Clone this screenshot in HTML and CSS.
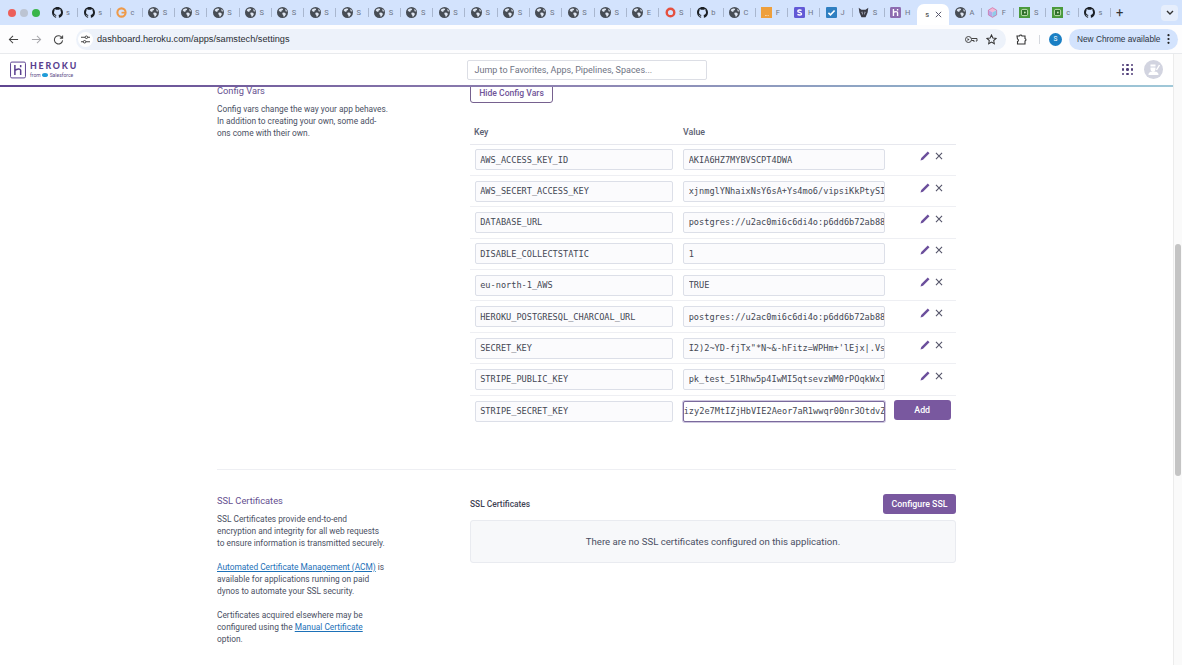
FILE: index.html
```html
<!DOCTYPE html>
<html lang="en">
<head>
    <meta charset="UTF-8">
    <title>samstech · Settings | Heroku</title>
    <link rel="stylesheet" href="styles.css">
</head>
<body>
    <svg class="icon-defs" aria-hidden="true">
        <symbol id="gh" viewBox="0 0 16 16"><path fill="#1b1f24" d="M8 0C3.58 0 0 3.58 0 8c0 3.54 2.29 6.53 5.47 7.59.4.07.55-.17.55-.38 0-.19-.01-.82-.01-1.49-2.01.37-2.53-.49-2.69-.94-.09-.23-.48-.94-.82-1.13-.28-.15-.68-.52-.01-.53.63-.01 1.08.58 1.23.82.72 1.21 1.87.87 2.33.66.07-.52.28-.87.51-1.07-1.78-.2-3.64-.89-3.64-3.95 0-.87.31-1.59.82-2.15-.08-.2-.36-1.02.08-2.12 0 0 .67-.21 2.2.82.64-.18 1.32-.27 2-.27.68 0 1.36.09 2 .27 1.53-1.04 2.2-.82 2.2-.82.44 1.1.16 1.92.08 2.12.51.56.82 1.27.82 2.15 0 3.07-1.87 3.75-3.65 3.95.29.25.54.73.54 1.48 0 1.07-.01 1.93-.01 2.2 0 .21.15.46.55.38A8.013 8.013 0 0016 8c0-4.42-3.58-8-8-8z"/></symbol>
        <symbol id="globe" viewBox="0 0 16 16"><circle cx="8" cy="8" r="8" fill="#474d55"/><path fill="#dfe6f2" d="M3 3.5l3-1.5 3 .5-.5 2-2 .8-.2 2-2.3-.6-1.5-2zM8.500 8l3 .3 1.500 2-1.700 3-1.800.7-.5-2.500-1.500-1.500zM12 3l2 1.500.5 2-2-.5z"/></symbol>
        <symbol id="grammarly" viewBox="0 0 16 16"><circle cx="8" cy="8" r="6" fill="none" stroke="#ee9a4a" stroke-width="3"/><path fill="#ee9a4a" d="M8 7h6v2.500H8z"/></symbol>
        <symbol id="ring" viewBox="0 0 16 16"><circle cx="8" cy="8" r="5.500" fill="none" stroke="#e5503f" stroke-width="3.500"/></symbol>
        <symbol id="orange" viewBox="0 0 16 16"><rect width="16" height="16" fill="#ee9f3c"/><path fill="#fff" d="M6 12h1v1H6zM8 12h1v1H8zM10 12h1v1h-1z"/></symbol>
        <symbol id="stripe" viewBox="0 0 16 16"><rect width="16" height="16" rx="2" fill="#6259d6"/><path fill="none" stroke="#fff" stroke-width="2" d="M11 5.200C9.500 4 5.500 4 5.500 6c0 2.300 5.500 1.500 5.500 4 0 2-4.200 2-6 .8"/></symbol>
        <symbol id="check" viewBox="0 0 16 16"><rect width="16" height="16" rx="1.500" fill="#2f7fc1"/><path fill="none" stroke="#fff" stroke-width="2.400" d="M3.500 8.500l3 3 6-6.500"/></symbol>
        <symbol id="fox" viewBox="0 0 16 16"><path fill="#3a3a44" d="M1 1l4 3h6l4-3-1 7-3 7H5L2 8z"/><path fill="#c9cfe0" d="M6 6l1.500 6L5 8zM10 6l-1.500 6L11 8z"/></symbol>
        <symbol id="herokutab" viewBox="0 0 16 16"><rect width="16" height="16" rx="2" fill="#8d6cb0"/><path fill="none" stroke="#fff" stroke-width="2" d="M5 3v10M5 8c2-1.500 6-2 6 .5V13M11 3v2"/></symbol>
        <symbol id="cube" viewBox="0 0 16 16"><path fill="#f2b8d6" d="M8 1l6 3.500L8 8 2 4.500z"/><path fill="#b9a5e8" d="M2 4.500L8 8v7l-6-3.500z"/><path fill="#8ecbe8" d="M14 4.500L8 8v7l6-3.500z"/><path fill="none" stroke="#d0679c" d="M8 1l6 3.500v7L8 15l-6-3.500v-7z"/></symbol>
        <symbol id="greenbox" viewBox="0 0 16 16"><rect width="16" height="16" fill="#4a9a3c"/><rect x="3.500" y="3.500" width="9" height="9" rx="2" fill="#2f6f2a" stroke="#d7f0c8" stroke-width="1.200"/><circle cx="8.500" cy="8" r="1.300" fill="#d7f0c8"/></symbol>
        <symbol id="pencil" viewBox="0 0 12 12"><path fill="#6b4f9c" d="M9.300.6l2.100 2.100-7.800 7.800-3 .9.900-3z"/></symbol>
        <symbol id="cross" viewBox="0 0 10 10"><path fill="none" stroke="#55556a" stroke-width="1.400" d="M1.200 1.200l7.600 7.600M8.800 1.200L1.200 8.800"/></symbol>
    </svg>

    <!-- barra do navegador -->
    <div class="tab-strip">
        <div class="lights"><i class="light red"></i><i class="light grey"></i><i class="light green"></i></div>
        <div class="tab"><svg class="fav"><use href="#gh"/></svg><span>s</span></div>
        <div class="tab"><svg class="fav"><use href="#gh"/></svg><span>s</span></div>
        <div class="tab"><svg class="fav"><use href="#grammarly"/></svg><span>c</span></div>
        <div class="tab"><svg class="fav"><use href="#globe"/></svg><span>S</span></div>
        <div class="tab"><svg class="fav"><use href="#globe"/></svg><span>S</span></div>
        <div class="tab"><svg class="fav"><use href="#globe"/></svg><span>S</span></div>
        <div class="tab"><svg class="fav"><use href="#globe"/></svg><span>S</span></div>
        <div class="tab"><svg class="fav"><use href="#globe"/></svg><span>S</span></div>
        <div class="tab"><svg class="fav"><use href="#globe"/></svg><span>S</span></div>
        <div class="tab"><svg class="fav"><use href="#globe"/></svg><span>S</span></div>
        <div class="tab"><svg class="fav"><use href="#globe"/></svg><span>S</span></div>
        <div class="tab"><svg class="fav"><use href="#globe"/></svg><span>S</span></div>
        <div class="tab"><svg class="fav"><use href="#globe"/></svg><span>S</span></div>
        <div class="tab"><svg class="fav"><use href="#globe"/></svg><span>S</span></div>
        <div class="tab"><svg class="fav"><use href="#globe"/></svg><span>S</span></div>
        <div class="tab"><svg class="fav"><use href="#globe"/></svg><span>S</span></div>
        <div class="tab"><svg class="fav"><use href="#globe"/></svg><span>S</span></div>
        <div class="tab"><svg class="fav"><use href="#globe"/></svg><span>S</span></div>
        <div class="tab"><svg class="fav"><use href="#globe"/></svg><span>E</span></div>
        <div class="tab"><svg class="fav"><use href="#ring"/></svg><span>S</span></div>
        <div class="tab"><svg class="fav"><use href="#gh"/></svg><span>b</span></div>
        <div class="tab"><svg class="fav"><use href="#globe"/></svg><span>C</span></div>
        <div class="tab"><svg class="fav"><use href="#orange"/></svg><span>F</span></div>
        <div class="tab"><svg class="fav"><use href="#stripe"/></svg><span>H</span></div>
        <div class="tab"><svg class="fav"><use href="#check"/></svg><span>J</span></div>
        <div class="tab"><svg class="fav"><use href="#fox"/></svg><span>S</span></div>
        <div class="tab no-sep"><svg class="fav"><use href="#herokutab"/></svg><span>H</span></div>
        <div class="tab tab-active no-sep"><span>s</span><svg class="tab-close"><use href="#cross"/></svg></div>
        <div class="tab"><svg class="fav"><use href="#globe"/></svg><span>A</span></div>
        <div class="tab"><svg class="fav"><use href="#cube"/></svg><span>F</span></div>
        <div class="tab"><svg class="fav"><use href="#greenbox"/></svg><span>S</span></div>
        <div class="tab"><svg class="fav"><use href="#greenbox"/></svg><span>c</span></div>
        <div class="tab"><svg class="fav"><use href="#gh"/></svg><span>s</span></div>
        <div class="new-tab">+</div>
        <div class="tab-menu">
            <svg width="8" height="6" viewBox="0 0 8 6"><path fill="none" stroke="#333" stroke-width="1.400" d="M1 1l3 3 3-3"/></svg>
        </div>
    </div>

    <div class="toolbar">
        <svg class="nav-icon" viewBox="0 0 12 12"><path fill="none" stroke="#444" stroke-width="1.100" d="M11 6H1.500M5.500 2l-4 4 4 4"/></svg>
        <svg class="nav-icon nav-forward" viewBox="0 0 12 12"><path fill="none" stroke="#a8a8ac" stroke-width="1.100" d="M1 6h9.500M6.500 2l4 4-4 4"/></svg>
        <svg class="nav-icon nav-reload" viewBox="0 0 12 12"><path fill="none" stroke="#444" stroke-width="1.100" d="M10 4.200A4.500 4.500 0 1 0 10.500 7M10.500 1.500v3h-3"/></svg>
        <div class="omnibox">
            <div class="site-info">
                <svg width="9" height="9" viewBox="0 0 10 10"><path fill="none" stroke="#333" stroke-width="1" d="M0 2.500h4.500M7.500 2.500H10M0 7.500h2.500M5.500 7.500H10"/><circle cx="6" cy="2.500" r="1.400" fill="none" stroke="#333"/><circle cx="4" cy="7.500" r="1.400" fill="none" stroke="#333"/></svg>
            </div>
            <span class="url">dashboard.heroku.com/apps/samstech/settings</span>
            <svg class="key-icon" width="13" height="9" viewBox="0 0 13 9"><circle cx="3.500" cy="4.500" r="3" fill="none" stroke="#444"/><path fill="#444" d="M2.500 3l2 1.500-2 1.500z"/><path fill="none" stroke="#444" d="M6.500 3.500h5.500v2.500h-1.200M6.500 5.500H9v1.500"/></svg>
            <svg class="star-icon" width="11" height="11" viewBox="0 0 12 12"><path fill="none" stroke="#333" stroke-width="1.100" d="M6 1l1.500 3.300 3.500.4-2.600 2.400.7 3.500L6 8.900l-3.100 1.700.7-3.500L1 4.700l3.500-.4z"/></svg>
        </div>
        <svg class="puzzle" width="12" height="12" viewBox="0 0 12 12"><path fill="none" stroke="#333" stroke-width="1.100" d="M1 3h2.500a1.300 1.300 0 0 1 2.500 0h3v2.500a1.300 1.300 0 0 1 0 2.500V11H1.500V8.500a1.300 1.300 0 0 0 0-2.500z"/></svg>
        <div class="toolbar-sep"></div>
        <div class="profile">S</div>
        <div class="update-pill">
            <span>New Chrome available</span>
            <svg width="3" height="10" viewBox="0 0 3 10"><circle cx="1.500" cy="1.200" r="1.100" fill="#222"/><circle cx="1.500" cy="5" r="1.100" fill="#222"/><circle cx="1.500" cy="8.800" r="1.100" fill="#222"/></svg>
        </div>
    </div>

    <div class="viewport">
        <div class="site">
            <header class="app-header">
                <div class="brand">
                    <svg class="brand-mark" viewBox="0 0 18 19"><rect x=".6" y=".6" width="16.800" height="17.800" rx="1.500" fill="none" stroke="#5a3f8f" stroke-width="1.100"/><path fill="none" stroke="#5a3f8f" stroke-width="1.700" d="M5.500 4v11M5.500 10c2-1.500 6.500-2.500 6.500 0v5M12 4v2.500"/></svg>
                    <div class="brand-text">
                        <div class="brand-name">HEROKU</div>
                        <div class="brand-from">from <i class="sf-cloud"></i> Salesforce</div>
                    </div>
                </div>
                <div class="jump-box">Jump to Favorites, Apps, Pipelines, Spaces...</div>
                <div class="header-right">
                    <div class="apps-grid">
                        <i></i><i></i><i></i><i></i><i></i><i></i><i></i><i></i><i></i>
                    </div>
                    <div class="user-avatar">
                        <svg width="13" height="13" viewBox="0 0 13 13"><path fill="#fff" d="M3.500 1.500h5v4.500a2.500 2.500 0 0 1-5 0zM1.500 12c0-2.800 2-3.500 5-3.500s5 .7 5 3.500z"/><path fill="none" stroke="#d0d3e0" d="M3 4h6"/><path fill="none" stroke="#fff" stroke-width="1.400" d="M12.500 2l-3 5"/></svg>
                    </div>
                </div>
            </header>
            <div class="header-line"></div>

            <div class="page">
                <div class="page-inner">
                    <section class="settings-row">
                        <div class="settings-info">
                            <h3>Config Vars</h3>
                            <p>Config vars change the way your app behaves.<br>In addition to creating your own, some add-<br>ons come with their own.</p>
                        </div>
                        <div class="settings-body">
                            <button class="btn-outline">Hide Config Vars</button>
                            <div class="vars-head"><span class="head-key">Key</span><span>Value</span></div>

                            <div class="var-row">
                                <input class="var-input key-input" value="AWS_ACCESS_KEY_ID">
                                <input class="var-input value-input" value="AKIA6HZ7MYBVSCPT4DWA">
                                <div class="var-actions"><svg class="pencil"><use href="#pencil"/></svg><svg class="cross"><use href="#cross"/></svg></div>
                            </div>
                            <div class="var-row">
                                <input class="var-input key-input" value="AWS_SECERT_ACCESS_KEY">
                                <input class="var-input value-input" value="xjnmglYNhaixNsY6sA+Ys4mo6/vipsiKkPtySI">
                                <div class="var-actions"><svg class="pencil"><use href="#pencil"/></svg><svg class="cross"><use href="#cross"/></svg></div>
                            </div>
                            <div class="var-row">
                                <input class="var-input key-input" value="DATABASE_URL">
                                <input class="var-input value-input" value="postgres://u2ac0mi6c6di4o:p6dd6b72ab88">
                                <div class="var-actions"><svg class="pencil"><use href="#pencil"/></svg><svg class="cross"><use href="#cross"/></svg></div>
                            </div>
                            <div class="var-row">
                                <input class="var-input key-input" value="DISABLE_COLLECTSTATIC">
                                <input class="var-input value-input" value="1">
                                <div class="var-actions"><svg class="pencil"><use href="#pencil"/></svg><svg class="cross"><use href="#cross"/></svg></div>
                            </div>
                            <div class="var-row">
                                <input class="var-input key-input" value="eu-north-1_AWS">
                                <input class="var-input value-input" value="TRUE">
                                <div class="var-actions"><svg class="pencil"><use href="#pencil"/></svg><svg class="cross"><use href="#cross"/></svg></div>
                            </div>
                            <div class="var-row">
                                <input class="var-input key-input" value="HEROKU_POSTGRESQL_CHARCOAL_URL">
                                <input class="var-input value-input" value="postgres://u2ac0mi6c6di4o:p6dd6b72ab88">
                                <div class="var-actions"><svg class="pencil"><use href="#pencil"/></svg><svg class="cross"><use href="#cross"/></svg></div>
                            </div>
                            <div class="var-row">
                                <input class="var-input key-input" value="SECRET_KEY">
                                <input class="var-input value-input" value="I2)2~YD-fjTx&quot;*N~&amp;-hFitz=WPHm+'lEjx|.Vs">
                                <div class="var-actions"><svg class="pencil"><use href="#pencil"/></svg><svg class="cross"><use href="#cross"/></svg></div>
                            </div>
                            <div class="var-row">
                                <input class="var-input key-input" value="STRIPE_PUBLIC_KEY">
                                <input class="var-input value-input" value="pk_test_51Rhw5p4IwMI5qtsevzWM0rPOqkWxI">
                                <div class="var-actions"><svg class="pencil"><use href="#pencil"/></svg><svg class="cross"><use href="#cross"/></svg></div>
                            </div>
                            <div class="var-row var-row-last">
                                <input class="var-input key-input" value="STRIPE_SECRET_KEY">
                                <input class="var-input value-input value-focus" value="izy2e7MtIZjHbVIE2Aeor7aR1wwqr00nr3OtdvZ">
                                <button class="btn-add">Add</button>
                            </div>
                        </div>
                    </section>

                    <section class="settings-row settings-ssl">
                        <div class="settings-info">
                            <h3>SSL Certificates</h3>
                            <p>SSL Certificates provide end-to-end<br>encryption and integrity for all web requests<br>to ensure information is transmitted securely.</p>
                            <p><a href="#">Automated Certificate Management (ACM)</a> is<br>available for applications running on paid<br>dynos to automate your SSL security.</p>
                            <p>Certificates acquired elsewhere may be<br>configured using the <a href="#">Manual Certificate</a><br>option.</p>
                        </div>
                        <div class="settings-body">
                            <div class="ssl-head">
                                <strong>SSL Certificates</strong>
                                <button class="btn-primary">Configure SSL</button>
                            </div>
                            <div class="empty-box">There are no SSL certificates configured on this application.</div>
                        </div>
                    </section>
                </div>
            </div>
        </div>
        <div class="scrollbar"><div class="scroll-thumb"></div></div>
    </div>
</body>
</html>
```

FILE: styles.css
```css
html, body {
    margin: 0;
    padding: 0;
    height: 100%;
    overflow: hidden;
}

body {
    display: flex;
    flex-direction: column;
    font-family: Roboto, Arial, sans-serif;
    color: #4a4f63;
    background-color: #fff;
}

.icon-defs {
    display: none;
}

/* abas */
.tab-strip {
    display: flex;
    align-items: center;
    height: 25px;
    background-color: #d3e3fd;
    flex-shrink: 0;
}

.lights {
    display: flex;
    align-items: center;
    gap: 4px;
    width: 46px;
    padding-left: 8px;
    box-sizing: border-box;
}

.light {
    width: 8px;
    height: 8px;
    border-radius: 50%;
}

.red { background-color: #ec5f5a; }
.grey { background-color: #bcc4d2; }
.green { background-color: #39b54a; }

.tab {
    display: flex;
    align-items: center;
    gap: 3.500px;
    width: 32.27px;
    height: 25px;
    padding-left: 5.500px;
    box-sizing: border-box;
    font-size: 7.500px;
    color: #6d7585;
    position: relative;
    overflow: hidden;
    flex-shrink: 0;
}

.tab::after {
    content: "";
    position: absolute;
    right: 0;
    top: 8px;
    width: 1px;
    height: 9px;
    background-color: #a9b7cf;
}

.tab.no-sep::after {
    display: none;
}

.fav {
    width: 11px;
    height: 11px;
    flex-shrink: 0;
}

.tab-active {
    background-color: #fff;
    border-radius: 7px 7px 0 0;
    height: 21px;
    margin-top: 4px;
    padding-left: 8px;
    gap: 6px;
    color: #333;
}

.tab-close {
    width: 7px;
    height: 7px;
}

.new-tab {
    margin-left: 3px;
    width: 12px;
    text-align: center;
    font-size: 13px;
    line-height: 13px;
    color: #333;
}

.tab-menu {
    display: flex;
    align-items: center;
    justify-content: center;
    width: 17px;
    height: 16px;
    margin-left: auto;
    margin-right: 4px;
    border-radius: 4px;
    background-color: #e6eefc;
}

/* barra de endereco */
.toolbar {
    display: flex;
    align-items: center;
    height: 28px;
    background-color: #fdfdfe;
    border-bottom: 1px solid #e8eaed;
    flex-shrink: 0;
}

.nav-icon {
    width: 11px;
    height: 11px;
    margin-left: 8px;
}

.nav-forward { margin-left: 12px; }
.nav-reload { margin-left: 11px; }

.omnibox {
    display: flex;
    align-items: center;
    width: 930px;
    height: 21px;
    margin-left: 12px;
    border-radius: 11px;
    background-color: #edf2fa;
    flex-shrink: 0;
}

.site-info {
    display: flex;
    align-items: center;
    justify-content: center;
    width: 15px;
    height: 15px;
    margin-left: 2px;
    border-radius: 50%;
    background-color: #fff;
}

.url {
    margin-left: 4px;
    font-family: "Liberation Sans", Arial, sans-serif;
    font-size: 9.200px;
    color: #2a2d33;
}

.key-icon {
    margin-left: auto;
}

.star-icon {
    margin-left: 8px;
    margin-right: 9px;
}

.puzzle {
    margin-left: 10px;
}

.toolbar-sep {
    width: 1px;
    height: 9px;
    margin-left: 11px;
    background-color: #d5d8de;
}

.profile {
    width: 13px;
    height: 13px;
    margin-left: 9px;
    border-radius: 50%;
    background-color: #1a7fc4;
    color: #fff;
    font-size: 6.500px;
    line-height: 13px;
    text-align: center;
}

.update-pill {
    display: flex;
    align-items: center;
    justify-content: space-between;
    width: 109px;
    height: 21px;
    margin-left: 7px;
    padding: 0 8px;
    box-sizing: border-box;
    border-radius: 11px;
    background-color: #d3e3fd;
    font-family: "Liberation Sans", Arial, sans-serif;
    font-size: 8.300px;
    color: #2b3442;
}

/* heroku */
.viewport {
    display: flex;
    flex: 1;
    min-height: 0;
}

.site {
    display: flex;
    flex-direction: column;
    flex: 1;
    min-width: 0;
}

.app-header {
    display: flex;
    align-items: center;
    height: 31px;
    padding-left: 10px;
    padding-right: 10px;
    flex-shrink: 0;
}

.brand {
    display: flex;
    align-items: center;
    gap: 4px;
    width: 456.500px;
}

.brand-mark {
    width: 16px;
    height: 18px;
}

.brand-name {
    font-family: Lato, Arial, sans-serif;
    font-weight: 900;
    font-size: 8.800px;
    line-height: 10px;
    letter-spacing: 1.800px;
    color: #5a3f8f;
}

.brand-from {
    display: flex;
    align-items: center;
    gap: 1.500px;
    font-size: 5px;
    line-height: 8px;
    color: #5a4b86;
}

.sf-cloud {
    width: 6px;
    height: 4px;
    border-radius: 50%;
    background-color: #1f9cd8;
}

.jump-box {
    width: 240px;
    height: 20px;
    padding-left: 7px;
    box-sizing: border-box;
    border: 1px solid #dcdee5;
    border-radius: 2px;
    font-size: 9px;
    line-height: 18px;
    color: #6f7484;
}

.header-right {
    display: flex;
    align-items: center;
    gap: 11px;
    margin-left: auto;
}

.apps-grid {
    display: grid;
    grid-template-columns: repeat(3, 2.500px);
    gap: 1.800px;
}

.apps-grid i {
    width: 2.500px;
    height: 2.500px;
    border-radius: 50%;
    background-color: #4f3d78;
}

.user-avatar {
    display: flex;
    align-items: center;
    justify-content: center;
    width: 19px;
    height: 19px;
    border-radius: 50%;
    background-color: #d2d4e0;
}

.header-line {
    height: 2px;
    flex-shrink: 0;
    background: linear-gradient(to right, #5f4590, #8d7fb0 45%, #8fb4cc 85%, #a0c8d8);
}

.page {
    flex: 1;
    min-height: 0;
    overflow: hidden;
}

/* pagina rolada: o botao fica cortado pelo cabecalho */
.page-inner {
    width: 739px;
    margin: -6px auto 0;
}

.settings-row {
    display: flex;
}

.settings-info {
    width: 253px;
    flex-shrink: 0;
    font-size: 8.350px;
    line-height: 12px;
}

.settings-info h3 {
    margin: 0;
    padding-top: 3px;
    font-size: 9.300px;
    line-height: 14px;
    font-weight: 400;
    color: #65508f;
}

.settings-info p {
    margin: 5px 0 12px;
}

.settings-info a {
    color: #1d71b8;
}

.settings-body {
    width: 486px;
}

.btn-outline {
    display: block;
    width: 83px;
    height: 22px;
    padding: 1px 0 0;
    border: 1px solid #76618f;
    border-radius: 3px;
    background-color: #fff;
    font-family: inherit;
    font-size: 8.600px;
    font-weight: 500;
    color: #6f5498;
}

.vars-head {
    display: flex;
    height: 41.500px;
    padding-top: 23px;
    padding-left: 4px;
    box-sizing: border-box;
    border-bottom: 1px solid #e7e8ee;
    font-size: 8.800px;
    line-height: 12px;
    font-weight: 500;
    color: #5b6072;
}

.head-key {
    width: 209px;
}

.var-row {
    display: flex;
    align-items: center;
    height: 31.400px;
    padding-left: 4.700px;
    box-sizing: border-box;
    border-bottom: 1px solid #eeeff3;
}

.var-row-last {
    border-bottom: none;
}

.var-input {
    height: 21px;
    padding: 0 0 0 5px;
    box-sizing: border-box;
    border: 1px solid #dcdfe8;
    border-radius: 2px;
    background-color: #fbfbfd;
    font-family: "DejaVu Sans Mono", "Liberation Mono", monospace;
    font-size: 8.600px;
    color: #444854;
    outline: none;
}

.key-input {
    width: 198px;
    padding-left: 4.500px;
}

.value-input {
    width: 202px;
    margin-left: 10px;
}

.value-focus {
    padding-left: 0;
    background-color: #fff;
    border-color: #7a6a9c;
    box-shadow: 0 0 0 1px #cfc7e0;
}

.var-actions {
    display: flex;
    align-items: center;
    gap: 5px;
    margin-left: 35px;
    margin-top: -7px;
}

.pencil {
    width: 10px;
    height: 10px;
}

.cross {
    width: 8px;
    height: 8px;
}

.btn-add {
    width: 57px;
    height: 20px;
    margin-left: 9px;
    margin-top: -3px;
    padding: 0;
    border: none;
    border-radius: 3px;
    background-color: #79589f;
    color: #fff;
    font-family: inherit;
    font-size: 8.800px;
    font-weight: 500;
}

.settings-ssl {
    margin-top: 42px;
    padding-top: 24px;
    border-top: 1px solid #eeeff3;
}

.settings-ssl h3 {
    padding-top: 0;
}

.ssl-head {
    display: flex;
    align-items: center;
    justify-content: space-between;
}

.ssl-head strong {
    font-size: 8.400px;
    font-weight: 500;
    color: #3f4354;
}

.btn-primary {
    width: 73px;
    height: 20px;
    padding: 0;
    border: none;
    border-radius: 3px;
    background-color: #79589f;
    color: #fff;
    font-family: inherit;
    font-size: 8.800px;
    font-weight: 500;
}

.empty-box {
    height: 43px;
    margin-top: 5.500px;
    box-sizing: border-box;
    border: 1px solid #e9ebf0;
    border-radius: 3px;
    background-color: #f7f8fa;
    font-size: 9.630px;
    line-height: 41px;
    text-align: center;
    color: #4a4f63;
}

.scrollbar {
    width: 9px;
    flex-shrink: 0;
    background-color: #fafafa;
    border-left: 1px solid #ececec;
    box-sizing: border-box;
}

.scroll-thumb {
    width: 6px;
    height: 232px;
    margin-top: 190px;
    margin-left: 1px;
    border-radius: 3px;
    background-color: #c4c4c4;
}
```
